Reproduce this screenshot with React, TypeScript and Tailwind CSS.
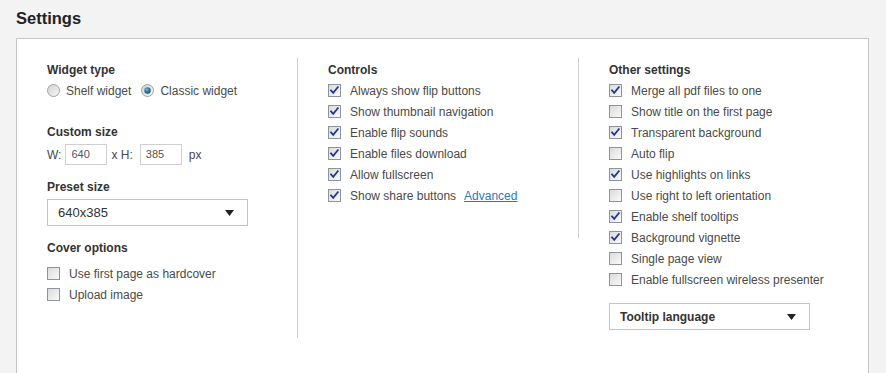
import React from "react";

function Check({ on }: { on: boolean }) {
  return (
    <svg width="13" height="13" viewBox="0 0 13 13" className="shrink-0">
      <defs>
        <linearGradient id="cbg" x1="0" y1="0" x2="1" y2="1">
          <stop offset="0" stopColor="#d9d9d9" />
          <stop offset="1" stopColor="#fbfbfb" />
        </linearGradient>
      </defs>
      <rect x="0.5" y="0.5" width="12" height="12" fill="url(#cbg)" stroke="#8f939b" />
      {on && (
        <path d="M3 6.4 L5.2 8.8 L9.8 3.2" fill="none" stroke="#22388a" strokeWidth="1.8" strokeLinecap="square" />
      )}
    </svg>
  );
}

function Radio({ on }: { on: boolean }) {
  return (
    <svg width="13" height="13" viewBox="0 0 13 13" className="shrink-0">
      <defs>
        <linearGradient id="rbg" x1="0" y1="0" x2="1" y2="1">
          <stop offset="0" stopColor="#d0d0d0" />
          <stop offset="1" stopColor="#f8f8f8" />
        </linearGradient>
        <radialGradient id="rdot" cx="0.4" cy="0.35" r="0.7">
          <stop offset="0" stopColor="#5fc0e8" />
          <stop offset="1" stopColor="#0c3e5e" />
        </radialGradient>
      </defs>
      <circle cx="6.5" cy="6.5" r="6" fill="url(#rbg)" stroke="#a3a3a3" />
      {on && <circle cx="6.5" cy="6.5" r="3.2" fill="url(#rdot)" />}
    </svg>
  );
}

function Row({ on, label, extra }: { on: boolean; label: string; extra?: React.ReactNode }) {
  return (
    <div className="flex h-[21px] items-center gap-[9px]">
      <Check on={on} />
      <span>{label}</span>
      {extra}
    </div>
  );
}

function Heading({ children }: { children: React.ReactNode }) {
  return <div className="flex h-[21px] items-center font-bold text-[#333]">{children}</div>;
}

function Select({ value, bold }: { value: string; bold?: boolean }) {
  return (
    <div className="flex h-[27px] w-[201px] items-center justify-between border border-[#c4c4c4] bg-white pl-[10px] pr-[13px]">
      <span className={bold ? "font-bold text-[#333]" : "text-[13px] text-[#333]"}>{value}</span>
      <svg width="9" height="6" viewBox="0 0 9 6">
        <path d="M0 0 H9 L4.5 6 Z" fill="#222" />
      </svg>
    </div>
  );
}

const controls: [boolean, string][] = [
  [true, "Always show flip buttons"],
  [true, "Show thumbnail navigation"],
  [true, "Enable flip sounds"],
  [true, "Enable files download"],
  [true, "Allow fullscreen"],
];

const other: [boolean, string][] = [
  [true, "Merge all pdf files to one"],
  [false, "Show title on the first page"],
  [true, "Transparent background"],
  [false, "Auto flip"],
  [true, "Use highlights on links"],
  [false, "Use right to left orientation"],
  [true, "Enable shelf tooltips"],
  [true, "Background vignette"],
  [false, "Single page view"],
  [false, "Enable fullscreen wireless presenter"],
];

export default function App() {
  return (
    <div className="min-h-[373px] bg-[#f3f3f3] pl-4 pr-[17px] font-['Liberation_Sans',Arial,sans-serif] text-[12px] text-[#4a4a4a]">
      <div className="flex h-[38px] items-center pb-[2px] text-[16.5px] font-bold text-[#222]">Settings</div>
      <div className="flex items-start border border-[#c6c6c6] bg-white pb-12 pl-[30px] pt-[19px]">
        <div className="w-[251px] border-r border-[#cfcfcf] pb-[33px] pt-px">
          <Heading>Widget type</Heading>
          <div className="flex h-[21px] items-center">
            <Radio on={false} />
            <span className="ml-[6px]">Shelf widget</span>
            <span className="ml-[10px]" />
            <Radio on={true} />
            <span className="ml-[6px]">Classic widget</span>
          </div>
          <div className="mt-[20px]">
            <Heading>Custom size</Heading>
          </div>
          <div className="mt-[2px] flex h-[21px] items-center">
            <span>W:</span>
            <div className="ml-[4px] flex h-[21px] w-[42px] items-center border border-[#cfcfcf] pl-[5px] text-[11px] text-[#555]">640</div>
            <span className="ml-[4px]">x H:</span>
            <div className="ml-[7px] flex h-[21px] w-[42px] items-center border border-[#cfcfcf] pl-[5px] text-[11px] text-[#555]">385</div>
            <span className="ml-[7px]">px</span>
          </div>
          <div className="mt-[11px]">
            <Heading>Preset size</Heading>
          </div>
          <div className="mt-[2px]">
            <Select value="640x385" />
          </div>
          <div className="mt-[11px]">
            <Heading>Cover options</Heading>
          </div>
          <div className="mt-[5px]">
            <Row on={false} label="Use first page as hardcover" />
            <Row on={false} label="Upload image" />
          </div>
        </div>
        <div className="w-[281px] border-r border-[#cfcfcf] pb-[32px] pl-[30px] pt-px">
          <Heading>Controls</Heading>
          {controls.map(([on, label]) => (
            <Row key={label} on={on} label={label} />
          ))}
          <Row
            on={true}
            label="Show share buttons"
            extra={<a className="ml-[-1px] text-[#2a7ab8] underline">Advanced</a>}
          />
        </div>
        <div className="pl-[30px] pt-px">
          <Heading>Other settings</Heading>
          {other.map(([on, label]) => (
            <Row key={label} on={on} label={label} />
          ))}
          <div className="mt-[13px]">
            <Select value="Tooltip language" bold />
          </div>
        </div>
      </div>
    </div>
  );
}
